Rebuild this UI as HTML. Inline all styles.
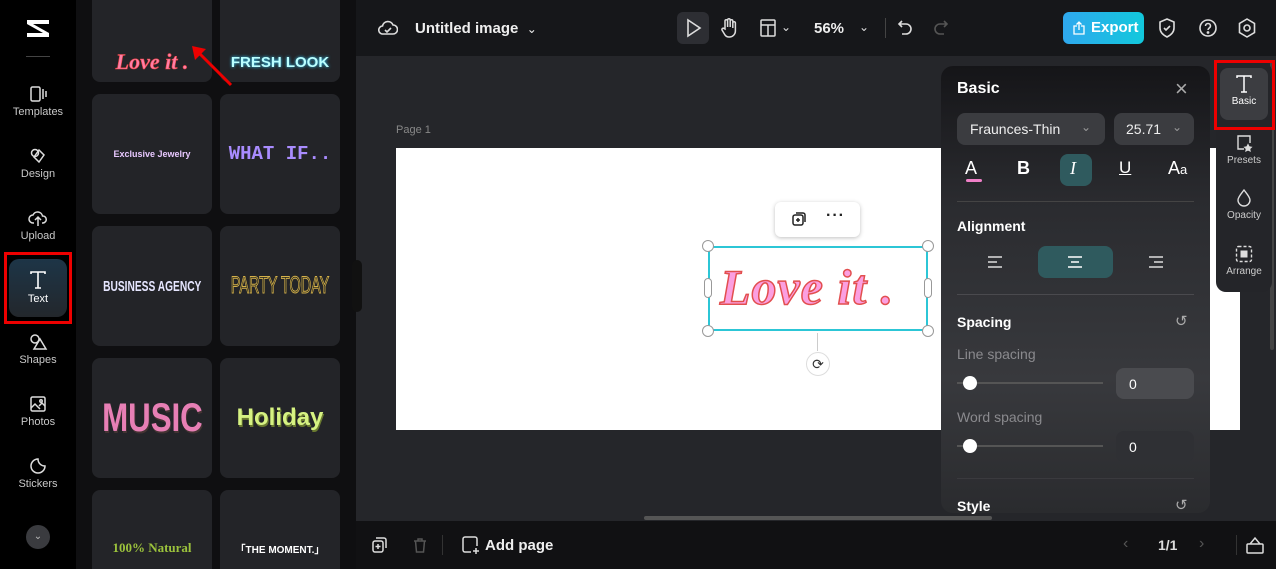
<!DOCTYPE html>
<html><head><meta charset="utf-8"><style>
*{box-sizing:border-box;margin:0;padding:0}
html,body{width:1276px;height:569px;overflow:hidden}
body{background:#25262a;font-family:"Liberation Sans",sans-serif;position:relative;color:#fff}
.a{position:absolute}
.rail{left:0;top:0;width:76px;height:569px;background:#000}
.ri{position:absolute;left:0;width:76px;text-align:center;font-size:11px;color:#c8c8c8}
.ri svg{display:block;margin:0 auto 3px}
.panel{left:76px;top:0;width:280px;height:569px;background:#0f0f11;overflow:hidden}
.card{position:absolute;width:120px;height:120px;background:#232428;border-radius:8px;display:flex;align-items:center;justify-content:center;font-weight:bold;white-space:nowrap}
.top{left:356px;top:0;width:920px;height:56px;background:#16171a}
.bot{left:356px;top:521px;width:920px;height:48px;background:#111113}
.tp{left:941px;top:66px;width:269px;height:447px;background:linear-gradient(#151518,#2a2b2f 30%,#38393d 70%,#2a2b2e);border-radius:12px}
.btn{position:absolute;background:#3b3c40;border-radius:8px}
</style></head><body>
<div class="a rail">
 <svg class="a" style="left:24px;top:16px" width="28" height="24" viewBox="0 0 28 24"><path d="M3 4 L25 4 L25 8 L9 8 L25 17 L25 21 L3 21 L3 17 L19 17 L3 8Z" fill="#fff"/></svg>
 <div class="a" style="left:26px;top:56px;width:24px;height:1px;background:#444"></div>
 <div class="ri" style="top:85px"><svg width="18" height="18" viewBox="0 0 18 18" fill="none" stroke="#ddd" stroke-width="1.5"><rect x="2" y="2" width="9" height="14" rx="1.5"/><path d="M14 4v10M17 6v6"/></svg>Templates</div>
 <div class="ri" style="top:147px"><svg width="18" height="18" viewBox="0 0 18 18" fill="none" stroke="#ddd" stroke-width="1.5"><circle cx="6" cy="6" r="3.5"/><path d="M10 3l5 5-5 7-5-5z"/></svg>Design</div>
 <div class="ri" style="top:209px"><svg width="20" height="18" viewBox="0 0 20 18" fill="none" stroke="#ddd" stroke-width="1.5"><path d="M6 14H5a4 4 0 010-8 5 5 0 019.5 1A3.5 3.5 0 0115 14h-1M10 8v9M7 11l3-3 3 3"/></svg>Upload</div>
 <div class="a" style="left:4px;top:252px;width:68px;height:72px;border:3px solid #e00"></div>
 <div class="a" style="left:9px;top:259px;width:58px;height:58px;border-radius:10px;background:linear-gradient(#1d3547,#23272c)"></div>
 <div class="ri" style="top:270px;color:#fff"><svg width="20" height="20" viewBox="0 0 20 20" fill="none" stroke="#fff" stroke-width="1.6"><path d="M3 4V2h14v2M10 2v16M7 18h6"/></svg>Text</div>
 <div class="ri" style="top:333px"><svg width="20" height="18" viewBox="0 0 20 18" fill="none" stroke="#ddd" stroke-width="1.5"><circle cx="7" cy="6" r="4"/><path d="M12 6l6 10H6z"/></svg>Shapes</div>
 <div class="ri" style="top:395px"><svg width="18" height="18" viewBox="0 0 18 18" fill="none" stroke="#ddd" stroke-width="1.5"><rect x="2" y="2" width="14" height="14" rx="1.5"/><path d="M2 13l4-4 5 5M10 11l3-3 3 3"/><circle cx="12" cy="6" r="1.2"/></svg>Photos</div>
 <div class="ri" style="top:457px"><svg width="18" height="18" viewBox="0 0 18 18" fill="none" stroke="#ddd" stroke-width="1.5"><path d="M16 9A7 7 0 119 2c0 4 3 7 7 7z"/></svg>Stickers</div>
 <div class="a" style="left:26px;top:525px;width:24px;height:24px;border-radius:50%;background:#3a3b3f;color:#bbb;font-size:10px;text-align:center;line-height:24px">&#8964;</div>
</div>
<div class="a panel">
 <div class="card" style="left:16px;top:-38px;"><span style="font-family:'Liberation Serif',serif;font-style:italic;font-size:22px;color:#ff7fa8;margin-top:80px;-webkit-text-stroke:0.6px #e44">Love it .</span></div>
 <div class="card" style="left:144px;top:-38px"><span style="font-size:15px;color:#bff;margin-top:80px;text-shadow:0 0 3px #3cf">FRESH LOOK</span></div>
 <svg class="a" style="left:110px;top:40px" width="50" height="50"><path d="M45 45L12 12" stroke="#e00" stroke-width="3"/><path d="M6 6l14 3-11 11z" fill="#e00"/></svg>
 <div class="card" style="left:16px;top:94px"><span style="font-size:9px;color:#e8c8ff">Exclusive Jewelry</span></div>
 <div class="card" style="left:144px;top:94px"><span style="font-size:19px;color:#a98cff;font-family:'Liberation Mono',monospace">WHAT IF..</span></div>
 <div class="card" style="left:16px;top:226px"><span style="font-size:15px;color:#e6e6ff;display:inline-block;transform:scaleX(.68)">BUSINESS AGENCY</span></div>
 <div class="card" style="left:144px;top:226px"><span style="font-size:24px;color:#2a2a20;-webkit-text-stroke:1px #d6b24a;display:inline-block;transform:scaleX(.6);font-weight:normal">PARTY TODAY</span></div>
 <div class="card" style="left:16px;top:358px"><span style="font-size:40px;color:#e77fb5;display:inline-block;transform:scaleX(.78);text-shadow:1px 2px 0 #433">MUSIC</span></div>
 <div class="card" style="left:144px;top:358px"><span style="font-size:24px;color:#d6f282;text-shadow:1px 2px 0 #6a7a30">Holiday</span></div>
 <div class="card" style="left:16px;top:490px"><span style="font-size:13px;color:#9bc23c;font-family:'Liberation Serif',serif;margin-top:-4px">100% Natural</span></div>
 <div class="card" style="left:144px;top:490px"><span style="font-size:10px;color:#fff;margin-top:-4px">「THE MOMENT.」</span></div>
</div>
<div class="a" style="left:352px;top:260px;width:10px;height:52px;background:#111;border-radius:5px"></div>
<div class="a top">
 <svg class="a" style="left:22px;top:19px" width="20" height="18" viewBox="0 0 20 18" fill="none" stroke="#ddd" stroke-width="1.6"><path d="M5 15a4 4 0 01-.5-8A5.5 5.5 0 0115 6a4 4 0 010 9zM7 11l2 2 4-4"/></svg>
 <div class="a" style="left:59px;top:20px;font-size:15px;font-weight:bold;color:#eee">Untitled image &nbsp;<span style="font-weight:normal;font-size:12px">&#8964;</span></div>
 <div class="a" style="left:321px;top:12px;width:32px;height:32px;border-radius:6px;background:#2d2e33"></div>
 <svg class="a" style="left:329px;top:18px" width="18" height="20" viewBox="0 0 18 20" fill="none" stroke="#ddd" stroke-width="1.6"><path d="M3 2l12 8-12 8z"/></svg>
 <svg class="a" style="left:364px;top:17px" width="18" height="22" viewBox="0 0 18 22" fill="none" stroke="#ddd" stroke-width="1.5"><path d="M5 12V4a1.3 1.3 0 012.6 0v6V3a1.3 1.3 0 012.6 0v7V4a1.3 1.3 0 012.6 0v7V6a1.3 1.3 0 012.6 0v8a6 6 0 01-6 6H9a5 5 0 01-4-2L2 13a1.3 1.3 0 012-1.5z"/></svg>
 <svg class="a" style="left:404px;top:19px" width="16" height="18" viewBox="0 0 16 18" fill="none" stroke="#ddd" stroke-width="1.5"><rect x="1" y="1" width="14" height="16" rx="1"/><path d="M1 6h14M8 6v11"/></svg>
 <div class="a" style="left:425px;top:20px;font-size:12px;color:#ddd">&#8964;</div>
 <div class="a" style="left:458px;top:20px;font-size:15px;font-weight:bold;color:#eee">56%</div>
 <div class="a" style="left:503px;top:20px;font-size:12px;color:#ddd">&#8964;</div>
 <div class="a" style="left:529px;top:18px;width:1px;height:20px;background:#444"></div>
 <svg class="a" style="left:541px;top:19px" width="16" height="18" viewBox="0 0 16 18" fill="none" stroke="#ddd" stroke-width="1.6"><path d="M5 2L2 5l3 3M2 5h7a5 5 0 010 10H5"/></svg>
 <svg class="a" style="left:577px;top:19px" width="16" height="18" viewBox="0 0 16 18" fill="none" stroke="#555" stroke-width="1.6"><path d="M11 2l3 3-3 3M14 5H7a5 5 0 000 10h4"/></svg>
 <div class="a" style="left:707px;top:12px;width:81px;height:32px;border-radius:6px;background:linear-gradient(90deg,#2fa8ee,#12c8dc);font-size:15px;font-weight:bold;line-height:32px;padding-left:28px">Export</div>
 <svg class="a" style="left:717px;top:21px" width="12" height="14" viewBox="0 0 12 14" fill="none" stroke="#fff" stroke-width="1.3"><path d="M4 5H1v8h10V5H8M6 9V1M3.5 3.5L6 1l2.5 2.5"/></svg>
 <svg class="a" style="left:802px;top:18px" width="18" height="20" viewBox="0 0 18 20" fill="none" stroke="#ddd" stroke-width="1.6"><path d="M9 1l7 3v6c0 4-3 7-7 9-4-2-7-5-7-9V4zM6 10l2 2 4-4"/></svg>
 <svg class="a" style="left:842px;top:18px" width="20" height="20" viewBox="0 0 20 20" fill="none" stroke="#ddd" stroke-width="1.6"><circle cx="10" cy="10" r="8"/><path d="M7.5 8a2.5 2.5 0 115 0c0 2-2.5 2-2.5 4"/><circle cx="10" cy="14.5" r=".6" fill="#ddd"/></svg>
 <svg class="a" style="left:882px;top:18px" width="18" height="20" viewBox="0 0 18 20" fill="none" stroke="#ddd" stroke-width="1.6"><path d="M9 1l7.5 4.5v9L9 19l-7.5-4.5v-9z"/><circle cx="9" cy="10" r="3"/></svg>
</div>
<div class="a" style="left:396px;top:124px;font-size:11px;color:#888">Page 1</div>
<div class="a" style="left:396px;top:148px;width:844px;height:282px;background:#fff"></div>
<div class="a" style="left:775px;top:202px;width:85px;height:35px;background:#fff;border-radius:6px;box-shadow:0 1px 4px rgba(0,0,0,.25)"></div>
<svg class="a" style="left:791px;top:211px" width="16" height="16" viewBox="0 0 16 16" fill="none" stroke="#222" stroke-width="1.5"><rect x="2" y="4" width="10" height="10" rx="2"/><path d="M5 2h7a2 2 0 012 2v7M7 7v4M5 9h4"/></svg>
<div class="a" style="left:826px;top:207px;color:#222;font-size:16px;font-weight:bold;letter-spacing:1px">···</div>
<div class="a" style="left:708px;top:246px;width:220px;height:85px;border:2px solid #2cc6d6"></div>
<div class="a" style="left:720px;top:258px;font-family:'Liberation Serif',serif;font-weight:bold;font-style:italic;font-size:50px;color:#fb9fe0;-webkit-text-stroke:1.5px #e24f4f;letter-spacing:1px;white-space:nowrap">Love it .</div>
<div class="a" style="left:702px;top:240px;width:12px;height:12px;border-radius:50%;background:#fff;border:1px solid #999"></div>
<div class="a" style="left:922px;top:240px;width:12px;height:12px;border-radius:50%;background:#fff;border:1px solid #999"></div>
<div class="a" style="left:702px;top:325px;width:12px;height:12px;border-radius:50%;background:#fff;border:1px solid #999"></div>
<div class="a" style="left:922px;top:325px;width:12px;height:12px;border-radius:50%;background:#fff;border:1px solid #999"></div>
<div class="a" style="left:704px;top:278px;width:8px;height:20px;border-radius:4px;background:#fff;border:1px solid #999"></div>
<div class="a" style="left:924px;top:278px;width:8px;height:20px;border-radius:4px;background:#fff;border:1px solid #999"></div>
<div class="a" style="left:817px;top:333px;width:1px;height:18px;background:#ccc"></div>
<div class="a" style="left:806px;top:352px;width:24px;height:24px;border-radius:50%;background:#fff;border:1px solid #ddd;color:#333;font-size:14px;text-align:center;line-height:22px">&#10227;</div>
<div class="a" style="left:644px;top:516px;width:348px;height:4px;border-radius:2px;background:#555"></div>
<div class="a" style="left:1270px;top:60px;width:4px;height:290px;border-radius:2px;background:#444"></div>
<div class="a bot">
 <svg class="a" style="left:16px;top:16px" width="16" height="16" viewBox="0 0 16 16" fill="none" stroke="#ddd" stroke-width="1.5"><rect x="1" y="4" width="10" height="11" rx="2"/><path d="M4 1h8a2 2 0 012 2v8M6 7v5M3.5 9.5h5"/></svg>
 <svg class="a" style="left:56px;top:16px" width="16" height="16" viewBox="0 0 16 16" fill="none" stroke="#555" stroke-width="1.5"><path d="M2 4h12M6 4V2h4v2M3.5 4l1 11h7l1-11"/></svg>
 <div class="a" style="left:86px;top:14px;width:1px;height:20px;background:#333"></div>
 <svg class="a" style="left:106px;top:15px" width="18" height="18" viewBox="0 0 18 18" fill="none" stroke="#ddd" stroke-width="1.5"><path d="M9 16H3a2 2 0 01-2-2V3a2 2 0 012-2h10a2 2 0 012 2v7M14 12v6M11 15h6"/></svg>
 <div class="a" style="left:129px;top:16px;font-size:15px;font-weight:bold;color:#eee">Add page</div>
 <div class="a" style="left:767px;top:14px;font-size:16px;color:#555">&#8249;</div>
 <div class="a" style="left:802px;top:16px;font-size:14px;font-weight:bold;color:#ddd">1/1</div>
 <div class="a" style="left:843px;top:14px;font-size:16px;color:#555">&#8250;</div>
 <div class="a" style="left:880px;top:14px;width:1px;height:20px;background:#333"></div>
 <svg class="a" style="left:890px;top:15px" width="18" height="18" viewBox="0 0 18 18" fill="none" stroke="#ddd" stroke-width="1.5"><rect x="1" y="8" width="16" height="9" rx="1"/><path d="M4 8l5-6 5 6"/></svg>
</div>
<div class="a tp">
 <div class="a" style="left:16px;top:14px;font-size:16px;font-weight:bold">Basic</div>
 <div class="a" style="left:234px;top:10px;font-size:22px;color:#aaa;font-weight:100">×</div>
 <div class="btn" style="left:16px;top:47px;width:148px;height:32px"><span style="position:absolute;left:13px;top:8px;font-size:14px;color:#eee">Fraunces-Thin</span><span style="position:absolute;left:124px;top:7px;font-size:12px;color:#999">&#8964;</span></div>
 <div class="btn" style="left:173px;top:47px;width:80px;height:32px"><span style="position:absolute;left:12px;top:8px;font-size:14px;color:#eee">25.71</span><span style="position:absolute;left:58px;top:7px;font-size:12px;color:#999">&#8964;</span></div>
 <div class="a" style="left:24px;top:92px;font-size:18px">A</div>
 <div class="a" style="left:25px;top:113px;width:16px;height:3px;background:#f080c8;border-radius:2px"></div>
 <div class="a" style="left:76px;top:92px;font-size:18px;font-weight:bold">B</div>
 <div class="btn" style="left:119px;top:88px;width:32px;height:32px;background:#2f5a5e"></div>
 <div class="a" style="left:129px;top:92px;font-size:18px;font-style:italic;font-family:'Liberation Serif',serif">I</div>
 <div class="a" style="left:178px;top:92px;font-size:17px;text-decoration:underline">U</div>
 <div class="a" style="left:227px;top:92px;font-size:18px">A<span style="font-size:13px">a</span></div>
 <div class="a" style="left:16px;top:135px;width:237px;height:1px;background:#444"></div>
 <div class="a" style="left:16px;top:152px;font-size:14px;font-weight:bold">Alignment</div>
 <div class="btn" style="left:97px;top:180px;width:75px;height:32px;background:#2f5a5e"></div>
 <svg class="a" style="left:46px;top:189px" width="16" height="14" stroke="#ddd" stroke-width="1.5"><path d="M1 2h14M1 7h9M1 12h14"/></svg>
 <svg class="a" style="left:126px;top:189px" width="16" height="14" stroke="#fff" stroke-width="1.5"><path d="M1 2h14M4 7h8M1 12h14"/></svg>
 <svg class="a" style="left:207px;top:189px" width="16" height="14" stroke="#ddd" stroke-width="1.5"><path d="M1 2h14M6 7h9M1 12h14"/></svg>
 <div class="a" style="left:16px;top:228px;width:237px;height:1px;background:#4a4a4e"></div>
 <div class="a" style="left:16px;top:248px;font-size:14px;font-weight:bold">Spacing</div>
 <div class="a" style="left:234px;top:246px;font-size:15px;color:#aaa">&#8634;</div>
 <div class="a" style="left:16px;top:280px;font-size:14px;color:#8a8a8e">Line spacing</div>
 <div class="a" style="left:16px;top:316px;width:146px;height:2px;background:#555"></div>
 <div class="a" style="left:22px;top:310px;width:14px;height:14px;border-radius:50%;background:#fff"></div>
 <div class="btn" style="left:175px;top:302px;width:78px;height:31px;background:#4a4b4f"><span style="position:absolute;left:13px;top:8px;font-size:14px">0</span></div>
 <div class="a" style="left:16px;top:343px;font-size:14px;color:#8a8a8e">Word spacing</div>
 <div class="a" style="left:16px;top:379px;width:146px;height:2px;background:#555"></div>
 <div class="a" style="left:22px;top:373px;width:14px;height:14px;border-radius:50%;background:#fff"></div>
 <div class="btn" style="left:175px;top:365px;width:78px;height:31px;background:#2f3034"><span style="position:absolute;left:13px;top:8px;font-size:14px">0</span></div>
 <div class="a" style="left:16px;top:412px;width:237px;height:1px;background:#3a3a3e"></div>
 <div class="a" style="left:16px;top:432px;font-size:14px;font-weight:bold">Style</div>
 <div class="a" style="left:234px;top:430px;font-size:15px;color:#aaa">&#8634;</div>
</div>
<div class="a" style="left:1216px;top:62px;width:56px;height:230px;background:#242529;border-radius:10px"></div>
<div class="a" style="left:1214px;top:60px;width:61px;height:70px;border:3px solid #e00"></div>
<div class="a" style="left:1220px;top:68px;width:48px;height:52px;background:#3c3d41;border-radius:8px;text-align:center;font-size:10px;color:#fff">
 <svg style="display:block;margin:6px auto 2px" width="18" height="20" viewBox="0 0 18 20" fill="none" stroke="#fff" stroke-width="1.5"><path d="M2 4V2h14v2M9 2v16M6 18h6"/></svg>Basic</div>
<div class="a" style="left:1216px;top:134px;width:56px;text-align:center;font-size:10px;color:#ccc"><svg style="display:block;margin:0 auto 3px" width="18" height="18" viewBox="0 0 18 18" fill="none" stroke="#ddd" stroke-width="1.4"><path d="M9 15H3V2h12v7"/><path d="M13 11l1 2 2 .3-1.5 1.4.4 2-1.9-1-1.9 1 .4-2-1.5-1.4 2-.3z" fill="#ddd"/></svg>Presets</div>
<div class="a" style="left:1216px;top:189px;width:56px;text-align:center;font-size:10px;color:#ccc"><svg style="display:block;margin:0 auto 3px" width="16" height="18" viewBox="0 0 16 18" fill="none" stroke="#ddd" stroke-width="1.4"><path d="M8 1C5 5 2 8 2 11a6 6 0 0012 0c0-3-3-6-6-10z"/></svg>Opacity</div>
<div class="a" style="left:1216px;top:245px;width:56px;text-align:center;font-size:10px;color:#ccc"><svg style="display:block;margin:0 auto 3px" width="18" height="18" viewBox="0 0 18 18" fill="none" stroke="#ddd" stroke-width="1.4" stroke-dasharray="3 2"><rect x="1.5" y="1.5" width="15" height="15" rx="2"/><rect x="5.5" y="5.5" width="7" height="7" fill="#ddd" stroke="none"/></svg>Arrange</div>
</body></html>
